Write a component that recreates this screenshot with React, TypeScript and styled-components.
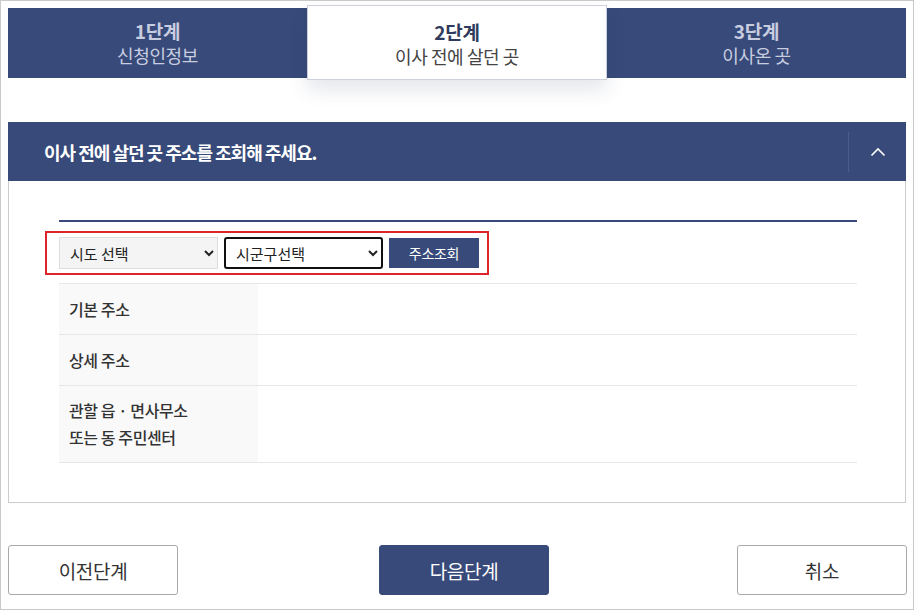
import React from "react";
import styled, { createGlobalStyle } from "styled-components";

const NAVY = "#374a79";
const FONT = `"Noto Sans CJK KR", "Noto Sans", sans-serif`;

const Global = createGlobalStyle`
  html, body { margin: 0; padding: 0; background: #fff; }
  body { font-family: ${FONT}; color: #333; }
  * { box-sizing: border-box; }
`;

const Frame = styled.div`
  width: 914px;
  height: 610px;
  border: 1px solid #c9c9c9;
  padding: 7px 7px 0 7px;
  display: flex;
  flex-direction: column;
`;

const Steps = styled.div`
  display: flex;
  height: 70px;
  background: ${NAVY};
  align-items: flex-start;
`;

const Step = styled.div<{ $active?: boolean; $w: number }>`
  width: ${(p) => p.$w}px;
  height: ${(p) => (p.$active ? 75 : 70)}px;
  margin-top: ${(p) => (p.$active ? -3 : 0)}px;
  background: ${(p) => (p.$active ? "#fff" : "transparent")};
  border: ${(p) => (p.$active ? "1px solid #cdd1db" : "none")};
  box-shadow: ${(p) => (p.$active ? "0 10px 18px rgba(40,55,100,0.12)" : "none")};
  position: relative;
  z-index: ${(p) => (p.$active ? 1 : 0)};
  display: flex;
  flex-direction: column;
  align-items: center;
  justify-content: center;
  padding-top: ${(p) => (p.$active ? 2 : 0)}px;
  color: ${(p) => (p.$active ? "#2f3b5c" : "#c8cde0")};
`;

const StepNum = styled.div`
  font-size: 19px;
  font-weight: 700;
  line-height: 24px;
  letter-spacing: -0.3px;
`;

const StepName = styled.div<{ $active?: boolean }>`
  font-size: 18px;
  font-weight: 400;
  line-height: 24px;
  letter-spacing: -0.4px;
  color: ${(p) => (p.$active ? "#444" : "#c8cde0")};
`;

const Header = styled.div`
  margin-top: 44px;
  height: 59px;
  background: ${NAVY};
  display: flex;
  align-items: center;
  padding-left: 36px;
`;

const HeaderTitle = styled.h2`
  flex: 1;
  margin: 0;
  color: #fff;
  font-size: 18px;
  font-weight: 700;
  letter-spacing: -1px;
`;

const Toggle = styled.button`
  width: 58px;
  height: 40px;
  border: none;
  border-left: 1px solid #4b5d8b;
  background: transparent;
  display: flex;
  align-items: center;
  justify-content: center;
  padding: 0;
  cursor: pointer;
`;

const Panel = styled.div`
  height: 322px;
  border: 1px solid #cccccc;
  border-top: none;
  padding: 39px 48px 0 50px;
`;

const Rule = styled.div`
  height: 2px;
  background: ${NAVY};
`;

const SearchBox = styled.div`
  margin: 9px 0 0 -14px;
  width: 444px;
  height: 44px;
  border: 2px solid #e0232b;
  display: flex;
  align-items: center;
  padding-left: 12px;
  gap: 6px;
`;

const Select = styled.select<{ $focus?: boolean }>`
  width: 159px;
  height: 32px;
  font-family: ${FONT};
  font-size: 15px;
  color: #222;
  padding: 0 6px;
  background: ${(p) => (p.$focus ? "#fff" : "#f4f4f4")};
  border: ${(p) => (p.$focus ? "2px solid #111" : "1px solid #dedede")};
  border-radius: ${(p) => (p.$focus ? 3 : 0)}px;
  outline: none;
`;

const SearchButton = styled.button`
  width: 90px;
  height: 30px;
  background: ${NAVY};
  color: #fff;
  border: none;
  font-family: ${FONT};
  font-size: 14px;
  letter-spacing: -0.3px;
  cursor: pointer;
`;

const Table = styled.div`
  margin-top: 8px;
  border-top: 1px solid #e6e6e6;
`;

const Row = styled.div<{ $h: number }>`
  display: flex;
  height: ${(p) => p.$h}px;
  border-bottom: 1px solid #e6e6e6;
`;

const Label = styled.div`
  width: 199px;
  background: #f9f9f9;
  padding-left: 10px;
  display: flex;
  align-items: center;
  font-size: 16px;
  font-weight: 500;
  line-height: 27px;
  color: #333;
  letter-spacing: -0.4px;
`;

const Value = styled.div`
  flex: 1;
`;

const Footer = styled.div`
  margin-top: 42px;
  display: flex;
  align-items: center;
`;

const FooterButton = styled.button<{ $primary?: boolean; $push?: string; $pull?: number }>`
  width: 170px;
  height: 50px;
  margin-left: ${(p) => p.$push ?? "0"};
  margin-right: ${(p) => p.$pull ?? 0}px;
  border-radius: 3px;
  border: 1px solid ${(p) => (p.$primary ? NAVY : "#a9a9a9")};
  background: ${(p) => (p.$primary ? NAVY : "#fff")};
  color: ${(p) => (p.$primary ? "#fff" : "#333")};
  font-family: ${FONT};
  font-size: 19px;
  letter-spacing: -0.3px;
  cursor: pointer;
`;

const steps = [
  { num: "1단계", name: "신청인정보", w: 299 },
  { num: "2단계", name: "이사 전에 살던 곳", w: 300, active: true },
  { num: "3단계", name: "이사온 곳", w: 299 },
];

export default function App() {
  return (
    <>
      <Global />
      <Frame>
        <Steps>
          {steps.map((s) => (
            <Step key={s.num} $active={s.active} $w={s.w}>
              <StepNum>{s.num}</StepNum>
              <StepName $active={s.active}>{s.name}</StepName>
            </Step>
          ))}
        </Steps>

        <Header>
          <HeaderTitle>이사 전에 살던 곳 주소를 조회해 주세요.</HeaderTitle>
          <Toggle aria-label="접기">
            <svg width="16" height="10" viewBox="0 0 16 10">
              <path d="M1.5 8.5 L8 2 L14.5 8.5" fill="none" stroke="#fff" strokeWidth="1.6" />
            </svg>
          </Toggle>
        </Header>

        <Panel>
          <Rule />
          <SearchBox>
            <Select defaultValue="">
              <option value="">시도 선택</option>
            </Select>
            <Select $focus defaultValue="">
              <option value="">시군구선택</option>
            </Select>
            <SearchButton>주소조회</SearchButton>
          </SearchBox>
          <Table>
            <Row $h={51}>
              <Label>기본 주소</Label>
              <Value />
            </Row>
            <Row $h={51}>
              <Label>상세 주소</Label>
              <Value />
            </Row>
            <Row $h={77}>
              <Label>
                관할 읍 · 면사무소
                <br />
                또는 동 주민센터
              </Label>
              <Value />
            </Row>
          </Table>
        </Panel>

        <Footer>
          <FooterButton>이전단계</FooterButton>
          <FooterButton $primary $push="201px">다음단계</FooterButton>
          <FooterButton $push="auto" $pull={-1}>취소</FooterButton>
        </Footer>
      </Frame>
    </>
  );
}
